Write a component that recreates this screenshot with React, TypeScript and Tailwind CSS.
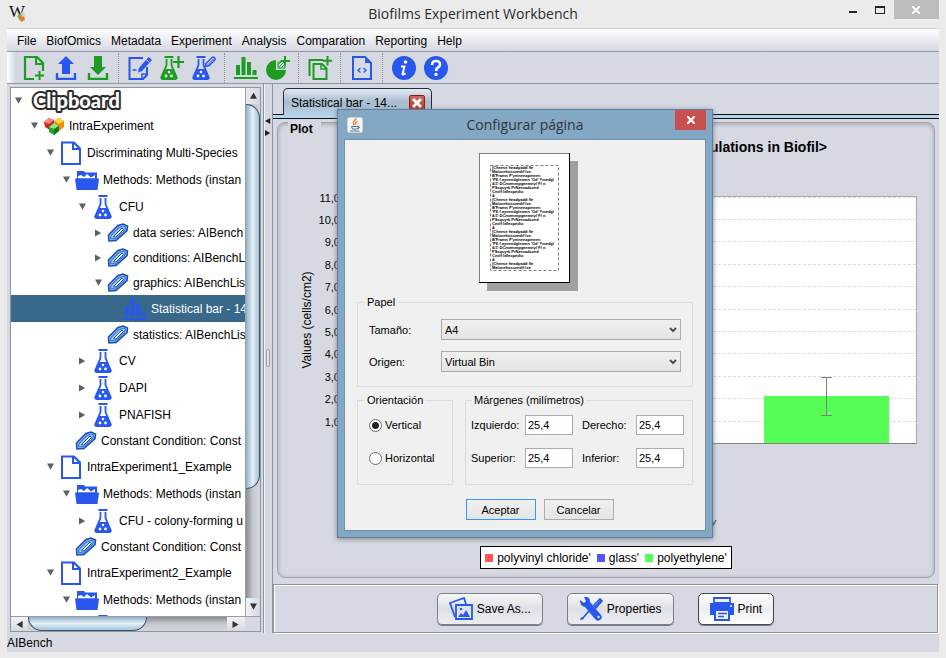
import React from 'react';
import { clsx } from 'clsx';

const BLUE = '#2857f0';
const GREEN = '#1c9c22';

type IconProps = { className?: string };

function Svg({ className = 'w-6 h-6', children }: { className?: string; children: React.ReactNode }) {
  return (
    <svg className={clsx('block shrink-0', className)} viewBox="0 0 24 24" fill="none" xmlns="http://www.w3.org/2000/svg" aria-hidden="true">
      {children}
    </svg>
  );
}

/* ---------- toolbar icons ---------- */

function NewFileIcon() {
  return (
    <Svg>
      <path d="M12 23H3V1h12l6 6v8" stroke={GREEN} strokeWidth="2.200" />
      <path d="M14 1v7h7" stroke={GREEN} strokeWidth="2" />
      <path d="M17.500 15v9M13 19.500h9" stroke={GREEN} strokeWidth="2" />
    </Svg>
  );
}

function UploadIcon() {
  return (
    <Svg>
      <path d="M12 0l8 8h-4v10H8V8H4z" fill={BLUE} />
      <path d="M3 17v6h18v-6" stroke={BLUE} strokeWidth="2.400" />
    </Svg>
  );
}

function DownloadIcon() {
  return (
    <Svg>
      <path d="M8 0h8v11h4l-8 8-8-8h4z" fill={GREEN} />
      <path d="M3 17v6h18v-6" stroke={GREEN} strokeWidth="2.400" />
    </Svg>
  );
}

function EditIcon() {
  return (
    <Svg>
      <path d="M15 2H1.500v21H15l4-4v-8" stroke={BLUE} strokeWidth="2" />
      <path d="M20.500 1l3.500 3L14 15l-4 1.500 1-4.500z" fill={BLUE} />
      <path d="M4.500 14h4" stroke={BLUE} strokeWidth="1.500" />
      <path d="M14 23v-5h5" stroke={BLUE} strokeWidth="1.500" />
      <path d="M18 3.500l3.500 3" stroke="#d6d9e1" />
    </Svg>
  );
}

function FlaskShape({ color, x = 0 }: { color: string; x?: number }) {
  return (
    <g transform={`translate(${x} 0)`}>
      <path d="M4.500 1h9" stroke={color} strokeWidth="2" />
      <path d="M6.500 3v6L1.200 21.500Q1 23 3 23h12q2 0 1.800-1.500L11.500 9V3" stroke={color} strokeWidth="1.800" />
      <path d="M5.500 13h7l4.500 9-2 2H3l-2-2z" fill={color} />
      <circle cx="9" cy="16" r="1.300" fill="#fff" />
      <circle cx="6" cy="20" r="1.400" fill="#fff" />
      <circle cx="11.500" cy="20" r="1.400" fill="#fff" />
    </g>
  );
}

function FlaskAddIcon() {
  return (
    <Svg>
      <FlaskShape color={GREEN} />
      <path d="M18.500 0v12M13 6h11" stroke={GREEN} strokeWidth="2.200" />
    </Svg>
  );
}

function FlaskEditIcon() {
  return (
    <Svg>
      <FlaskShape color={BLUE} />
      <path d="M14 7.500l6-6q2-1 3 1l.3 1-6 6-4 1z" fill="#d6d9e1" stroke={BLUE} strokeWidth="1.500" />
      <path d="M15.500 9l6-6" stroke={BLUE} />
    </Svg>
  );
}

function BarsIcon({ color = GREEN }: { color?: string }) {
  return (
    <Svg>
      <path d="M0 22h24" stroke={color} strokeWidth="2" />
      <path d="M2 9h4v10H2zM7.500 1h4v18h-4zM13 6h4v13h-4zM18.500 14h4v5h-4z" fill={color} />
    </Svg>
  );
}

function PieAddIcon() {
  return (
    <Svg>
      <path d="M10 4v10h10a10 10 0 1 1-10-10z" fill={GREEN} />
      <path d="M12 12V6h3M12 12h7V9M12 9l3-3M12 12l6-6M15 12l3-3" stroke={GREEN} strokeWidth="1" />
      <path d="M19 0v9.500M14.500 5H24" stroke={GREEN} strokeWidth="2" />
    </Svg>
  );
}

function CopyAddIcon() {
  return (
    <Svg>
      <path d="M1.500 20V4H15" stroke={GREEN} strokeWidth="2" />
      <path d="M5.500 8H14l4.500 4.500V23h-13z" stroke={GREEN} strokeWidth="2" />
      <path d="M13 8v5h5" stroke={GREEN} strokeWidth="1.500" />
      <path d="M19.500 0v9.500M15 4.700h9" stroke={GREEN} strokeWidth="2" />
    </Svg>
  );
}

function CodeFileIcon() {
  return (
    <Svg>
      <path d="M3 1h12l6 6v16H3z" stroke={BLUE} strokeWidth="2" />
      <path d="M15 1v6h6z" fill={BLUE} />
      <path d="M10.500 12l-2.500 2.200 2.500 2.200M13.500 12l2.500 2.200-2.500 2.200" stroke={BLUE} strokeWidth="1.300" />
    </Svg>
  );
}

function InfoIcon() {
  return (
    <Svg>
      <circle cx="12" cy="12" r="12" fill={BLUE} />
      <circle cx="13.500" cy="6" r="1.800" fill="#fff" />
      <path d="M9 10.500h3.500l-2 7.500q.5 1.200 3-.8" stroke="#fff" strokeWidth="2" />
    </Svg>
  );
}

function HelpIcon() {
  return (
    <Svg>
      <circle cx="12" cy="12" r="12" fill={BLUE} />
      <path d="M8 9q0-4 4-4t4 3.500q0 2-2 3t-2 3.500" stroke="#fff" strokeWidth="2.600" />
      <circle cx="12" cy="18.500" r="1.700" fill="#fff" />
    </Svg>
  );
}

/* ---------- tree icons ---------- */

function DocIcon() {
  return (
    <Svg>
      <path d="M3 1.500h12l6 6V23H3z" fill="#fff" stroke={BLUE} strokeWidth="2" />
      <path d="M14 1v7h7" stroke={BLUE} strokeWidth="2" />
      <path d="M15 1l6 6h-2l-4-4z" fill={BLUE} />
    </Svg>
  );
}

function FolderIcon() {
  return (
    <Svg>
      <path d="M2 3h7l1 1.500h12V12H2z" fill={BLUE} />
      <path d="M3 10.500V8l3-1 3 2 3-3 4 3.500 4-2.500v3.500z" fill="#fff" />
      <path d="M0 10.500h24L22.500 22h-21z" fill={BLUE} />
    </Svg>
  );
}

function FlaskIcon() {
  return (
    <Svg>
      <FlaskShape color={BLUE} x={3} />
    </Svg>
  );
}

function ClipIcon() {
  return (
    <svg className="block h-5 w-[22px] shrink-0" viewBox="0 0 22 20" fill="none" aria-hidden="true">
      <path d="M2 18l-.5-6L11 2.500 16 1l4.500 2-.5 4.500L9 17.500z" fill="#a9cdf8" stroke="#1d4ca8" strokeWidth="1.600" />
      <path d="M3.500 15.500l.5-3L12 4.500l5-1.500 1.500 1.500-1 3L8.500 16z" stroke="#3f83e0" strokeWidth="1.500" />
      <path d="M7 13l8-8 1.500 1.500L9 14H6.500z" fill="#fff" stroke="#1d4ca8" />
    </svg>
  );
}

function CubesIcon() {
  return (
    <svg className="block h-[18px] w-[22px] shrink-0" viewBox="0 0 22 18" aria-hidden="true">
      <path d="M1 5l5-4 5 2v6l-4 4-5-3z" fill="#d42222" />
      <path d="M1 5l5-4 5 2-5 4z" fill="#ff8b80" />
      <path d="M11 4l5-3 5 3v6l-5 4-5-5z" fill="#f08c10" />
      <path d="M11 4l5-3 5 3-5 3z" fill="#ffd23c" />
      <path d="M6 10l5-4 5 3v5l-5 4-5-3z" fill="#23a52e" />
      <path d="M6 10l5-4 5 3-5 3z" fill="#8be87c" />
      <path d="M11 12l5-3v5l-5 4z" fill="#0e7a1c" />
    </svg>
  );
}

function ClipboardTitle() {
  return (
    <svg className="block h-6 w-[104px] shrink-0" viewBox="0 0 104 24" aria-label="Clipboard">
      <text
        x="6"
        y="19"
        fontFamily="Lato, sans-serif"
        fontWeight="900"
        fontSize="20"
        fill="#fff"
        stroke="#2b2b2b"
        strokeWidth="4"
        strokeLinejoin="round"
        paintOrder="stroke"
      >
        Clipboard
      </text>
    </svg>
  );
}

/* ---------- action icons ---------- */

function ImagesIcon() {
  return (
    <Svg>
      <path d="M6 20L1 6l14-5 2 6" stroke={BLUE} strokeWidth="1.800" />
      <path d="M7 8h16v14H7z" stroke={BLUE} strokeWidth="1.800" />
      <path d="M9 20l3-4 2 2 3-5 4 7z" fill={BLUE} />
      <circle cx="12" cy="12" r="1.300" fill={BLUE} />
    </Svg>
  );
}

function ToolsIcon() {
  return (
    <Svg>
      <path d="M1 3l4 3 2-2-2-4q6-1 6 5l11 13q2 3-1 5t-5-1L6 10Q1 9 1 3z" fill={BLUE} />
      <circle cx="19.500" cy="20" r="1.200" fill="#e4e7ec" />
      <path d="M15 8l6-6 2 2-6 7z" fill="#e4e7ec" stroke={BLUE} strokeWidth="1.600" />
      <path d="M16 10l6-7M10 14l-7 8" stroke={BLUE} strokeWidth="1.800" />
      <path d="M1 23l1-3 3 2z" fill={BLUE} />
    </Svg>
  );
}

function PrinterIcon() {
  return (
    <Svg>
      <path d="M4 1h16v5H4z" fill="#eef1f6" stroke={BLUE} strokeWidth="1.800" />
      <path d="M0 6h24v12H0z" fill={BLUE} />
      <path d="M5 13h14v10H5z" fill="#eef1f6" stroke={BLUE} strokeWidth="2" />
      <path d="M8 16.500h9M8 19.500h6" stroke={BLUE} strokeWidth="1.300" />
      <circle cx="21" cy="9" r="1" fill="#fff" />
    </Svg>
  );
}

function AppIcon() {
  return (
    <svg className="block h-5 w-5" viewBox="0 0 20 20" aria-hidden="true">
      <text x="1" y="14" fontFamily="Liberation Serif, serif" fontSize="17" fill="#111">W</text>
      <path d="M9 13l4-3 2 5-3 3z" fill="#7db73e" />
      <path d="M12 12l4 1 1 4-4 2z" fill="#e8792b" />
      <path d="M13 10l3-1 1 4-3 1z" fill="#c9d6e2" />
    </svg>
  );
}

function JavaIcon() {
  return (
    <svg className="block h-4 w-4" viewBox="0 0 16 16" fill="none" aria-hidden="true">
      <rect x="0.500" y="0.500" width="15" height="15" rx="2" fill="#f5f7f8" stroke="#c8d3dc" />
      <path d="M9.500 1.500Q5 5 7 8M10.500 4Q7.500 6 9 8" stroke="#e8792b" strokeWidth="1.300" />
      <path d="M4.500 9.500h7l-1 2.500h-5zM3 14h9.500M11 9.500q3 0 0 2.500" stroke="#4c7396" />
    </svg>
  );
}

function Triangle({ dir, className }: { dir: 'up' | 'down' | 'left' | 'right' } & IconProps) {
  const d = { up: 'M0 7h8L4 0z', down: 'M0 0h8L4 7z', left: 'M7 0v8L0 4z', right: 'M0 0v8l7-4z' }[dir];
  return (
    <svg className={clsx('block shrink-0', className)} viewBox="0 0 8 8" fill="currentColor" aria-hidden="true">
      <path d={d} />
    </svg>
  );
}

/* ---------- menu and toolbar ---------- */

const menus = ['File', 'BiofOmics', 'Metadata', 'Experiment', 'Analysis', 'Comparation', 'Reporting', 'Help'];

const tools: { label: string; icon: React.ReactNode }[][] = [
  [
    { label: 'New', icon: <NewFileIcon /> },
    { label: 'Upload', icon: <UploadIcon /> },
    { label: 'Download', icon: <DownloadIcon /> },
  ],
  [
    { label: 'Edit', icon: <EditIcon /> },
    { label: 'Add method', icon: <FlaskAddIcon /> },
    { label: 'Edit method', icon: <FlaskEditIcon /> },
  ],
  [
    { label: 'Bar chart', icon: <BarsIcon /> },
    { label: 'Add pie chart', icon: <PieAddIcon /> },
  ],
  [{ label: 'Copy', icon: <CopyAddIcon /> }],
  [{ label: 'Source', icon: <CodeFileIcon /> }],
  [
    { label: 'Information', icon: <InfoIcon /> },
    { label: 'Help contents', icon: <HelpIcon /> },
  ],
];

function Toolbar() {
  return (
    <div role="toolbar" className="flex h-[33px] shrink-0 items-center gap-2 border-y border-[#9196a3] pr-2">
      <div className="-mr-[3px] h-full w-2.5 bg-linear-to-r from-white to-[#cdd1d9]" />
      {tools.map((group, i) => (
        <React.Fragment key={i}>
          {i > 0 && <div className="h-[30px] w-0.5 border-l border-dotted border-[#8d919c]" />}
          {group.map((t) => (
            <button key={t.label} type="button" aria-label={t.label}>
              {t.icon}
            </button>
          ))}
        </React.Fragment>
      ))}
    </div>
  );
}

/* ---------- tree ---------- */

type Kind = 'title' | 'cubes' | 'doc' | 'folder' | 'flask' | 'clip' | 'bars';
type Row = { level: number; kind: Kind; label: string; open?: boolean; selected?: boolean };

const rows: Row[] = [
  { level: 0, kind: 'title', label: '', open: true },
  { level: 1, kind: 'cubes', label: 'IntraExperiment', open: true },
  { level: 2, kind: 'doc', label: 'Discriminating Multi-Species', open: true },
  { level: 3, kind: 'folder', label: 'Methods: Methods (instan', open: true },
  { level: 4, kind: 'flask', label: 'CFU', open: true },
  { level: 5, kind: 'clip', label: 'data series: AIBench', open: false },
  { level: 5, kind: 'clip', label: 'conditions: AIBenchL', open: false },
  { level: 5, kind: 'clip', label: 'graphics: AIBenchLis', open: true },
  { level: 6, kind: 'bars', label: 'Statistical bar - 14', selected: true },
  { level: 5, kind: 'clip', label: 'statistics: AIBenchLis' },
  { level: 4, kind: 'flask', label: 'CV', open: false },
  { level: 4, kind: 'flask', label: 'DAPI', open: false },
  { level: 4, kind: 'flask', label: 'PNAFISH', open: false },
  { level: 3, kind: 'clip', label: 'Constant Condition: Const' },
  { level: 2, kind: 'doc', label: 'IntraExperiment1_Example', open: true },
  { level: 3, kind: 'folder', label: 'Methods: Methods (instan', open: true },
  { level: 4, kind: 'flask', label: 'CFU - colony-forming u', open: false },
  { level: 3, kind: 'clip', label: 'Constant Condition: Const' },
  { level: 2, kind: 'doc', label: 'IntraExperiment2_Example', open: true },
  { level: 3, kind: 'folder', label: 'Methods: Methods (instan', open: true },
  { level: 4, kind: 'flask', label: '' },
];

const indents = ['pl-1', 'pl-5', 'pl-9', 'pl-[52px]', 'pl-[68px]', 'pl-[84px]', 'pl-[100px]'];

const rowHeights: Record<Kind, string> = {
  title: 'h-[25px]',
  cubes: 'h-[26px]',
  doc: 'h-[27px]',
  folder: 'h-[27px]',
  flask: 'h-[27px]',
  bars: 'h-[27px]',
  clip: 'h-[25px]',
};

const rowIcons: Record<Kind, React.ReactNode> = {
  title: <ClipboardTitle />,
  cubes: <CubesIcon />,
  doc: <DocIcon />,
  folder: <FolderIcon />,
  flask: <FlaskIcon />,
  bars: <BarsIcon color={BLUE} />,
  clip: <ClipIcon />,
};

function Tree() {
  return (
    <ul role="tree" className="min-h-0 min-w-0 flex-1 overflow-hidden bg-white">
      {rows.map((r, i) => (
        <li
          key={i}
          role="treeitem"
          aria-selected={!!r.selected}
          className={clsx(
            'flex items-center whitespace-nowrap',
            indents[r.level],
            rowHeights[r.kind],
            r.selected && 'bg-[#39698a] text-white',
          )}
        >
          <span className="mr-1 w-2 shrink-0 text-[#5f6064]">
            {r.open !== undefined && <Triangle dir={r.open ? 'down' : 'right'} className="h-2 w-[7px]" />}
          </span>
          {rowIcons[r.kind]}
          <span className="ml-1">{r.label}</span>
        </li>
      ))}
    </ul>
  );
}

function TreePanel() {
  return (
    <aside className="mt-[3px] mb-px flex w-[251px] shrink-0 flex-col border border-[#8f94a1]">
      <div className="flex min-h-0 flex-1">
        <Tree />
        <div className="flex w-[15px] shrink-0 flex-col border-l border-[#9a9ea8] bg-linear-to-r from-[#8c8e94] via-[#c6c9cf] to-[#d3d6dc]">
          <button type="button" aria-label="Scroll up" className="flex h-4 items-center justify-center bg-linear-to-r from-[#e9ebef] to-[#d6d9df] text-[#333]">
            <Triangle dir="up" className="h-2 w-[7px]" />
          </button>
          <div className="min-h-0 flex-1">
            <div className="h-[78%] rounded-r-[14px] border-y border-r border-[#3d566e] bg-linear-to-r from-[#90b0c8] via-[#e6eff5] to-[#a3c4da]" />
          </div>
          <button type="button" aria-label="Scroll down" className="flex h-[18px] items-center justify-center bg-linear-to-r from-[#f2f3f5] to-[#d6d9df] text-[#333]">
            <Triangle dir="down" className="h-2 w-[7px]" />
          </button>
        </div>
      </div>
      <div className="flex h-[15px] shrink-0 border-t border-[#9a9ea8] bg-linear-to-b from-[#8c8e94] via-[#c6c9cf] to-[#d3d6dc]">
        <button type="button" aria-label="Scroll left" className="flex w-[17px] items-center justify-center bg-linear-to-b from-[#f2f3f5] to-[#d6d9df] text-[#333]">
          <Triangle dir="left" className="h-[7px] w-2" />
        </button>
        <div className="min-w-0 flex-1">
          <div className="h-full w-[60%] rounded-b-[14px] border-x border-b border-[#3d566e] bg-linear-to-b from-[#90b0c8] via-[#e6eff5] to-[#a3c4da]" />
        </div>
        <button type="button" aria-label="Scroll right" className="flex w-[18px] items-center justify-center bg-linear-to-b from-[#f2f3f5] to-[#d6d9df] text-[#333]">
          <Triangle dir="right" className="h-[7px] w-2" />
        </button>
        <div className="w-[15px] bg-[#d6d9e1]" />
      </div>
    </aside>
  );
}

function Splitter() {
  return (
    <div className="ml-0.5 flex w-2.5 shrink-0 flex-col items-center justify-center border-x border-[#8f94a1] shadow-[inset_1px_0_0_#f2f3f6]">
      <div className="flex flex-1 flex-col gap-1 self-stretch pt-[33px] text-[#222]">
        <Triangle dir="left" className="h-2 w-1.5 self-center" />
        <Triangle dir="right" className="h-2 w-1.5 self-center" />
      </div>
      <div className="mb-[34px] h-[18px] w-1 rounded-xs border border-[#9ba0ad] bg-[#e4e6eb]" />
      <div className="flex-1" />
    </div>
  );
}

/* ---------- plot ---------- */

const BASE_Y = 307;
const STEP = 22.4;
const ticks = Array.from({ length: 11 }, (_, i) => i + 1);

function Chart() {
  return (
    <svg className="block min-h-0 w-full flex-1" viewBox="0 0 656 410" fontFamily="Liberation Sans, Arial, sans-serif">
      <text x="549" y="16" textAnchor="end" fontSize="14" fontWeight="700">Populations in Biofil&gt;</text>
      <rect x="65" y="60" width="573" height="247" fill="#fff" stroke="#a9abb0" shapeRendering="crispEdges" />
      {ticks.map((n) => {
        const y = Math.round(BASE_Y - n * STEP);
        return (
          <g key={n}>
            <path d={`M65 ${y + 0.5}H638`} stroke="#dcdcdc" strokeDasharray="3 2" />
            <text x="62" y={y + 5} textAnchor="end" fontSize="11">{n},0</text>
          </g>
        );
      })}
      <rect x="486" y="260" width="125" height="47" fill="#55ff55" />
      <path d="M65 307.500H639" stroke="#808080" />
      <path d="M548.500 241v38M543 241.500h11M543 279.500h11" stroke="#808080" />
      <text transform="translate(33 184) rotate(-90)" textAnchor="middle" fontSize="12">Values (cells/cm2)</text>
      <text x="438" y="389" textAnchor="end" fontSize="9" fontStyle="italic">y</text>
    </svg>
  );
}

function PlotPanel() {
  return (
    <section className="mx-1 mt-[3px] flex min-h-0 flex-1 flex-col rounded-lg border border-[#a0a3ab] pb-2 shadow-[inset_0_1px_4px_#9da0a8]">
      <h2 className="-mt-px ml-2.5 h-3.5 self-start bg-[#d6d9e1] pr-2 pl-0.5 font-bold leading-[14px]">Plot</h2>
      <Chart />
      <div className="flex h-[23px] shrink-0 items-center gap-1 self-center border border-black bg-white px-1">
        <span className="h-2 w-2 bg-[#ff5555]" />
        <span>polyvinyl chloride'</span>
        <span className="ml-0.5 h-2 w-2 bg-[#5555ff]" />
        <span>glass'</span>
        <span className="ml-0.5 h-2 w-2 bg-[#55ff55]" />
        <span>polyethylene'</span>
      </div>
    </section>
  );
}

function ActionButton({ icon, children, primary }: { icon: React.ReactNode; children: React.ReactNode; primary?: boolean }) {
  return (
    <button
      type="button"
      className={clsx(
        'flex h-8 items-center gap-1 rounded-[5px] border px-[11px] shadow-[0_1px_0_#777b84]',
        primary
          ? 'border-[#3f4752] bg-linear-to-b from-[#fdfdfe] via-[#eceef2] to-white'
          : 'border-[#7c808a] bg-linear-to-b from-[#f6f7f9] via-[#dde0e6] to-[#eceef2]',
      )}
    >
      {icon}
      {children}
    </button>
  );
}

function Workspace() {
  return (
    <main className="flex min-w-0 flex-1 flex-col pt-1">
      <div className="flex h-[27px] shrink-0">
        <div className="w-2.5 border-b border-[#0a0f1c]" />
        <div role="tab" aria-selected="true" className="flex w-[149px] items-center justify-between rounded-t-[5px] border border-b-0 border-[#1c2f42] bg-linear-to-b from-[#e4eaf0] via-[#a9bccf] to-[#b4cfe6] pr-1.5 pl-[7px] pt-0.5">
          <span>Statistical bar - 14...</span>
          <button type="button" aria-label="Close tab" className="h-4 w-4 rounded-xs border border-[#8e1a12] bg-linear-to-b from-[#c96a62] to-[#c02214]">
            <svg viewBox="0 0 14 14" className="block h-full w-full" fill="none">
              <path d="M3 3l8 8M11 3l-8 8" stroke="#fff" strokeWidth="3" />
            </svg>
          </button>
        </div>
        <div className="flex-1 border-b border-[#0a0f1c]" />
      </div>
      <div className="h-1 shrink-0 border-b border-[#0a0f1c] bg-[#b9d3e8]" />
      <PlotPanel />
      <div className="mt-1.5 mr-px flex h-[49px] shrink-0 items-center justify-center gap-6 border border-[#8f94a1] shadow-[inset_1px_1px_0_#fff,1px_1px_0_#fff]">
        <ActionButton icon={<ImagesIcon />}>Save As...</ActionButton>
        <ActionButton icon={<ToolsIcon />}>Properties</ActionButton>
        <ActionButton icon={<PrinterIcon />} primary>Print</ActionButton>
      </div>
    </main>
  );
}

/* ---------- page setup dialog ---------- */

const sample = ['(Cheese headpadd fle', 'Malosehosseedif Ixe', "B'Fraem P'ymneeapmeen", "'PS f ayneedgleomn 'Od' Ymedgl", '&1! DCmemmpgeemnyl Ff n', 'PSsqcyrk PrNeroadsoed', 'Cexff Idfeopedio', '&'];

function PagePreview() {
  const lines = Array.from({ length: 26 }, (_, i) => sample[i % sample.length]);
  return (
    <svg className="ml-1.5 block h-[138px] w-[99px] shrink-0 self-center" viewBox="0 0 99 138" aria-label="Page preview">
      <rect x="8" y="8" width="91" height="130" fill="#a0a0a0" />
      <rect width="91" height="130" fill="#000" />
      <rect width="90" height="129" fill="#808080" />
      <rect x="1" y="1" width="89" height="128" fill="#fff" />
      <rect x="11.500" y="12.500" width="68" height="105" fill="none" stroke="#808080" strokeDasharray="3 2" />
      {lines.map((l, i) => (
        <text key={i} x="13" y={16 + i * 4} fontSize="4" fontWeight="700" fontFamily="Liberation Sans, sans-serif">{l}</text>
      ))}
    </svg>
  );
}

function SelectRow({ id, label, value }: { id: string; label: string; value: string }) {
  return (
    <div className="flex items-center">
      <label htmlFor={id} className="w-[72px]">{label}</label>
      <div className="relative flex-1">
        <select id={id} defaultValue={value} className="block h-[21px] w-full appearance-none border border-[#acacac] bg-linear-to-b from-[#f0f0f0] to-[#e5e5e5] pl-[3px]">
          <option>{value}</option>
        </select>
        <svg className="pointer-events-none absolute top-2 right-1 h-1.5 w-2" viewBox="0 0 8 6" fill="none">
          <path d="M1 1l3 3 3-3" stroke="#505050" strokeWidth="2" />
        </svg>
      </div>
    </div>
  );
}

function MarginField({ id, label }: { id: string; label: string }) {
  return (
    <div className="flex items-center">
      <label htmlFor={id} className="w-[54px]">{label}</label>
      <input id={id} type="text" defaultValue="25,4" className="h-5 w-12 border border-[#abadb3] bg-white px-0.5" />
    </div>
  );
}

function OrientationOption({ id, label, checked }: { id: string; label: string; checked?: boolean }) {
  return (
    <label htmlFor={id} className="flex items-center gap-[3px]">
      <input
        id={id}
        type="radio"
        name="orientation"
        defaultChecked={checked}
        className="h-[13px] w-[13px] appearance-none rounded-full border border-[#6a6a6a] bg-white checked:bg-[radial-gradient(circle,#222_0_3px,#fff_4px)]"
      />
      {label}
    </label>
  );
}

function PageSetupDialog() {
  return (
    <div role="dialog" aria-labelledby="dlg-title" className="absolute top-[109px] left-[337px] w-[376px] border border-[#60809b] bg-[#84a8c4] px-1.5 pb-1.5 shadow-[0_1px_5px_#7f828a]">
      <div className="flex h-[29px] items-start">
        <div className="w-[31px] pt-[7px] pl-[3px]"><JavaIcon /></div>
        <h1 id="dlg-title" className="flex-1 text-center font-['Open_Sans',sans-serif] text-[14px] leading-[29px] text-[#30363c]">Configurar página</h1>
        <button type="button" aria-label="Close" className="flex h-5 w-[31px] items-center justify-center bg-[#c75050]">
          <svg className="h-2 w-2" viewBox="0 0 8 8" fill="none"><path d="M0 0l8 8M8 0L0 8" stroke="#fff" strokeWidth="2" /></svg>
        </button>
      </div>
      <form className="flex flex-col border border-[#6e90ab] bg-[#f0f0f0] px-3 pt-[13px] pb-2.5 text-[11px] leading-[14px]">
        <PagePreview />
        <fieldset className="mt-1 h-[92px] min-w-0 border border-[#dcdcdc] px-[11px]">
          <legend className="-ml-1 px-0.5">Papel</legend>
          <div className="flex flex-col gap-[11px] pt-2.5">
            <SelectRow id="size" label="Tamaño:" value="A4" />
            <SelectRow id="source" label="Origen:" value="Virtual Bin" />
          </div>
        </fieldset>
        <div className="mt-1.5 flex gap-3">
          <fieldset className="h-[92px] w-24 min-w-0 border border-[#dcdcdc] pl-[11px]">
            <legend className="-ml-1 px-0.5">Orientación</legend>
            <div className="flex flex-col gap-[19px] pt-[11px]">
              <OrientationOption id="vertical" label="Vertical" checked />
              <OrientationOption id="horizontal" label="Horizontal" />
            </div>
          </fieldset>
          <fieldset className="h-[92px] min-w-0 flex-1 border border-[#dcdcdc] pl-[5px]">
            <legend className="ml-px px-0.5">Márgenes (milímetros)</legend>
            <div className="grid grid-cols-[111px_auto] gap-y-[13px] pt-2">
              <MarginField id="left" label="Izquierdo:" />
              <MarginField id="right" label="Derecho:" />
              <MarginField id="top" label="Superior:" />
              <MarginField id="bottom" label="Inferior:" />
            </div>
          </fieldset>
        </div>
        <div className="mt-3.5 flex justify-center gap-2 pl-[29px]">
          <button type="button" className="h-[21px] w-[70px] border border-[#3399ff] bg-linear-to-b from-[#f0f0f0] to-[#e5e5e5]">Aceptar</button>
          <button type="button" className="h-[21px] w-[70px] border border-[#acacac] bg-linear-to-b from-[#f0f0f0] to-[#e5e5e5]">Cancelar</button>
        </div>
      </form>
    </div>
  );
}

export default function App() {
  return (
    <div className="relative flex h-screen flex-col overflow-hidden bg-[#ebebeb] px-[7px] pb-1.5 font-['Liberation_Sans',Arial,sans-serif] text-[12px] leading-4 text-black">
      <header className="flex h-7 shrink-0 items-start justify-between">
        <div className="w-[100px] pt-[3px] pl-px"><AppIcon /></div>
        <div className="font-['Open_Sans',sans-serif] text-[14px] leading-7 text-[#2b2b2b]">Biofilms Experiment Workbench</div>
        <div className="flex w-[100px] justify-end">
          <button type="button" aria-label="Minimize" className="flex h-[19px] w-[26px] items-center justify-center">
            <span className="mt-1 h-0.5 w-2 bg-[#222]" />
          </button>
          <button type="button" aria-label="Maximize" className="flex h-[19px] w-7 items-center justify-center">
            <span className="h-2 w-2.5 border border-t-2 border-[#222]" />
          </button>
          <button type="button" aria-label="Close window" className="flex h-[19px] w-[45px] items-center justify-center bg-[#bcbcbc]">
            <svg className="h-2 w-2" viewBox="0 0 8 8" fill="none"><path d="M0 0l8 8M8 0L0 8" stroke="#fff" strokeWidth="2" /></svg>
          </button>
        </div>
      </header>

      <div className="flex min-h-0 flex-1 flex-col bg-[#d6d9e1]">
        <nav className="flex h-[23px] shrink-0 items-center gap-2.5 border-t border-[#d4d4d6] bg-linear-to-b from-white to-[#d6d9e1] pt-0.5 pl-2.5">
          {menus.map((m) => (
            <button key={m} type="button">{m}</button>
          ))}
        </nav>
        <Toolbar />
        <div className="flex min-h-0 flex-1 pl-[3px]">
          <TreePanel />
          <Splitter />
          <Workspace />
        </div>
        <footer className="flex h-[19px] shrink-0 items-center">AIBench</footer>
      </div>

      <PageSetupDialog />
    </div>
  );
}
